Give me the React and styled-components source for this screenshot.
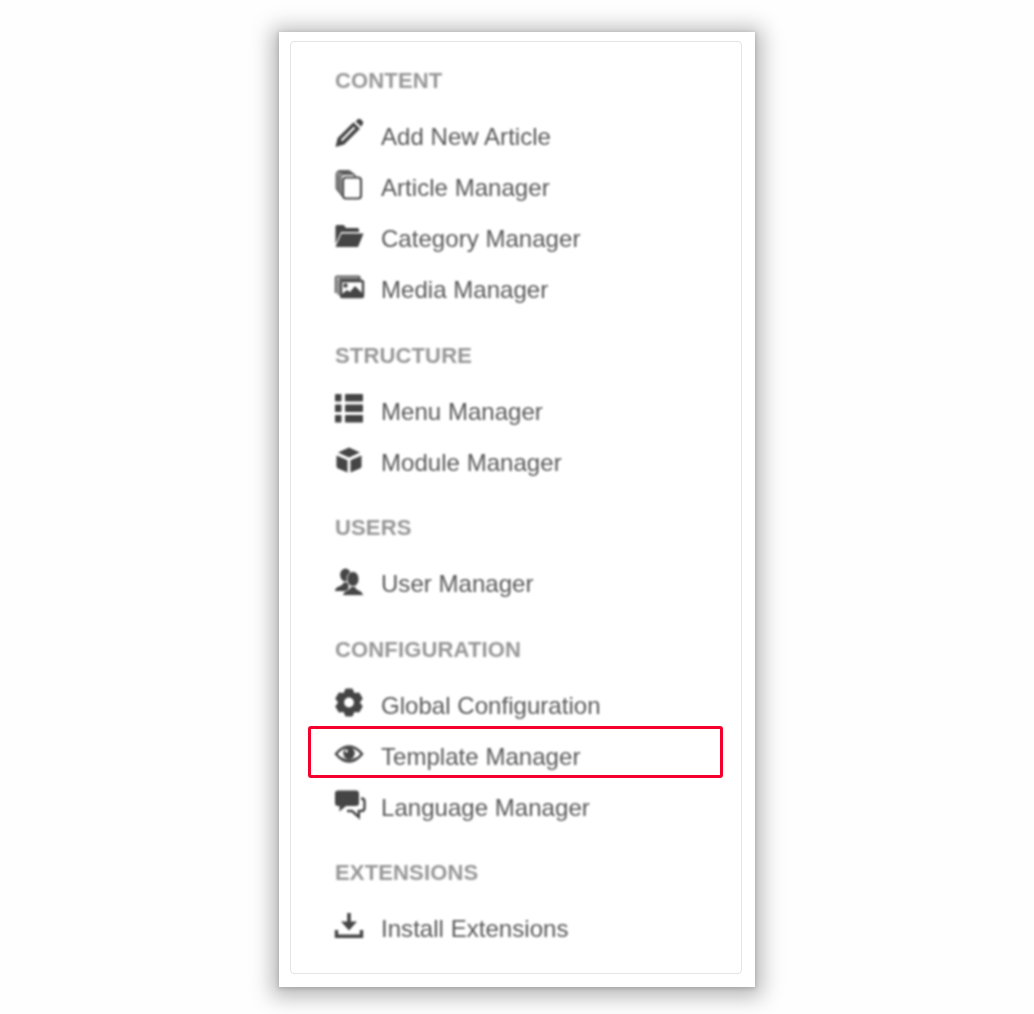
import React from "react";
import styled, { createGlobalStyle } from "styled-components";

const Global = createGlobalStyle`
  html, body { margin: 0; padding: 0; background: #fefefe; }
  body { font-family: "Liberation Sans", Arial, sans-serif; }
`;

const Page = styled.div`
  width: 1034px;
  height: 1014px;
  padding: 32px 0 0 279px;
  box-sizing: border-box;
  overflow: hidden;
`;

const Card = styled.div`
  width: 476px;
  height: 955px;
  box-sizing: border-box;
  padding: 9px 13px 13px 11px;
  background: #fff;
  box-shadow: 0 3px 20px 7px rgba(0, 0, 0, 0.28), 0 1px 4px 1px rgba(0, 0, 0, 0.14);
`;

const Inner = styled.div`
  height: 933px;
  box-sizing: border-box;
  padding: 24px 0 0 44px;
  border: 1px solid #e4e4e4;
  border-radius: 4px;
`;

const Group = styled.section`
  margin-bottom: 25px;
`;

const Heading = styled.h2`
  margin: 0 0 15.5px;
  height: 30px;
  line-height: 30px;
  font-size: 22px;
  font-weight: 700;
  letter-spacing: 0.15px;
  color: #969696;
  filter: blur(0.85px);
`;

const Row = styled.div`
  position: relative;
  display: flex;
  align-items: center;
  height: 51px;

  ${(p) =>
    p.$marked &&
    `&::after {
      content: "";
      position: absolute;
      left: -27px;
      top: -5.5px;
      width: 415px;
      height: 52px;
      box-sizing: border-box;
      border: 3px solid #f5002c;
      border-radius: 3px;
    }`}
`;

const Label = styled.span`
  font-size: 24px;
  letter-spacing: 0.04px;
  color: #585858;
  filter: blur(0.85px);
`;

const IconBox = styled.span`
  flex: 0 0 46px;
  height: 30px;
  margin-top: -8px;
  margin-left: -1px;
  margin-right: 1px;
  color: #454545;
  filter: blur(0.85px);
  & svg { display: block; overflow: visible; }
`;

const Svg = ({ children }) => (
  <svg width="32" height="30" viewBox="0 0 32 30" fill="currentColor">{children}</svg>
);

const Pencil = () => (
  <Svg>
    <path d="M1.500 29 3.600 20 19.500 4.200 26 10.700 10.200 26.500Z" />
    <path d="M7.500 22.500 20.500 9.500" stroke="#fff" strokeWidth="2.200" />
    <path d="M21.500 3.200 24 1.200q1.400-1 2.600 0l2.200 2.200q1 1.200 0 2.600L27 8.800Z" />
  </Svg>
);

const Copy = () => (
  <Svg>
    <g fill="#fff" stroke="#5c5c5c" strokeWidth="1.800">
      <rect x="2.500" y="2" width="15" height="20" rx="3.500" />
      <rect x="4.500" y="3.500" width="15" height="21" rx="3.500" />
      <rect x="6.500" y="5" width="15" height="22" rx="3.500" />
    </g>
    <rect x="9" y="8.500" width="18" height="21" rx="3" fill="#fff" stroke="#4a4a4a" strokeWidth="2.200" />
  </Svg>
);

const Folder = () => (
  <Svg>
    <path d="M1.500 6.500q0-1.500 1.500-1.500h6q1 0 1.600 1l1.400 2h11.500q1.500 0 1.500 1.500V12H7L1.500 24Z" />
    <path d="M7.500 13.500H29.500L24 27H1.500Z" />
  </Svg>
);

const Picture = () => (
  <Svg>
    <path d="M1.800 22V7q0-1.500 1.500-1.500h21q1.500 0 1.500 1.500v2" fill="none" stroke="#5c5c5c" strokeWidth="2" />
    <path d="M4.500 24V9.500q0-1.500 1.500-1.500h20" fill="none" stroke="#666" strokeWidth="1.800" />
    <rect x="7" y="10" width="22" height="16" rx="1" fill="#fff" stroke="currentColor" strokeWidth="2.400" />
    <circle cx="11.500" cy="14.500" r="2.200" />
    <path d="M8 25.500v-2.500l5-4 3 2 5-6 7 7v3.500Z" />
  </Svg>
);

const List = () => (
  <Svg>
    <rect x="1" y="1" width="6.500" height="7.500" rx="0.800" />
    <rect x="11" y="1" width="18" height="7.500" rx="0.800" />
    <rect x="1" y="11.500" width="6.500" height="7.500" rx="0.800" />
    <rect x="11" y="11.500" width="18" height="7.500" rx="0.800" />
    <rect x="1" y="22" width="6.500" height="7.500" rx="0.800" />
    <rect x="11" y="22" width="18" height="7.500" rx="0.800" />
  </Svg>
);

const Cube = () => (
  <Svg>
    <path d="M15 3.500 26 8.600 15 13.600 4 8.600Z" />
    <path d="M2.500 11.500 13.500 16.200V28.500L3.500 24.200 2.500 22.800Z" />
    <path d="M27.500 11.500 16.500 16.200V28.500L26.500 24.200 27.500 22.800Z" />
  </Svg>
);

const Users = () => (
  <Svg>
    <ellipse cx="11.500" cy="10" rx="5.400" ry="6.500" />
    <path d="M1 26Q1 23 5 21.500q4-1.500 4.500-4h5v8.500Z" />
    <g stroke="#fff" strokeWidth="0.800">
      <ellipse cx="19" cy="14" rx="6" ry="7.500" />
      <path d="M8.500 30.500q.5-4 5-5.500 3-1 3-3.500h5q0 2.500 3 3.500 4.500 1.500 5 5.500Z" />
    </g>
  </Svg>
);

const Cog = () => (
  <Svg>
    <g transform="translate(15 15.500)">
      <circle r="8" fill="none" stroke="currentColor" strokeWidth="6.200" />
      {[0, 60, 120, 180, 240, 300].map((a) => (
        <path key={a} d="M-2.800-12.800H2.800L4.800-8H-4.800Z" stroke="currentColor" strokeWidth="2.200" strokeLinejoin="round" transform={`rotate(${a})`} />
      ))}
    </g>
  </Svg>
);

const Eye = () => (
  <Svg>
    <path d="M2 16C7 9.800 11 8.500 15 8.500S23 9.800 28 16C23 22.200 19 23.500 15 23.500S7 22.200 2 16Z" fill="none" stroke="currentColor" strokeWidth="2.400" />
    <circle cx="15" cy="15.200" r="5.800" />
    <circle cx="12.500" cy="13" r="1.500" fill="#fff" />
    <path d="M6 19q9 6.500 18 0-9 3.500-18 0Z" />
  </Svg>
);

const Comments = () => (
  <Svg>
    <path d="M4 1.500H22q3 0 3 3V14q0 3-3 3H12L5.500 22.500V17H4q-3 0-3-3V4.500q0-3 3-3Z" />
    <path d="M27 9.500q3.500 0 3.500 3V19q0 3-3.500 3h-2.200v6L18 22h-5" fill="none" stroke="currentColor" strokeWidth="2.400" />
  </Svg>
);

const Download = () => (
  <Svg>
    <rect x="13.200" y="3" width="3.600" height="9.500" />
    <path d="M7 11.500H23L15 20.500Z" />
    <path d="M2.500 20v6.200H27.500V20" fill="none" stroke="currentColor" strokeWidth="3.400" />
  </Svg>
);

const groups = [
  {
    title: "CONTENT",
    items: [
      ["Add New Article", Pencil],
      ["Article Manager", Copy],
      ["Category Manager", Folder],
      ["Media Manager", Picture],
    ],
  },
  {
    title: "STRUCTURE",
    items: [
      ["Menu Manager", List],
      ["Module Manager", Cube],
    ],
  },
  { title: "USERS", items: [["User Manager", Users]] },
  {
    title: "CONFIGURATION",
    items: [
      ["Global Configuration", Cog],
      ["Template Manager", Eye, true],
      ["Language Manager", Comments],
    ],
  },
  { title: "EXTENSIONS", items: [["Install Extensions", Download]] },
];

export default function App() {
  return (
    <Page>
      <Global />
      <Card>
        <Inner>
          {groups.map((g) => (
            <Group key={g.title}>
              <Heading>{g.title}</Heading>
              {g.items.map(([label, Icon, marked]) => (
                <Row key={label} $marked={marked}>
                  <IconBox><Icon /></IconBox>
                  <Label>{label}</Label>
                </Row>
              ))}
            </Group>
          ))}
        </Inner>
      </Card>
    </Page>
  );
}
